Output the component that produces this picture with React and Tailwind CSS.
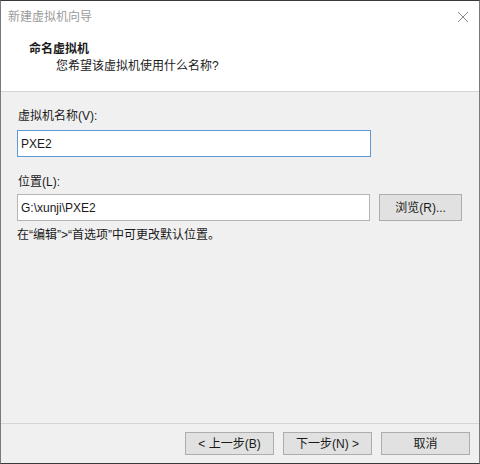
import React from "react";

const Btn = ({ children, className = "" }) => (
  <button
    className={
      "h-[23px] border border-[#adadad] bg-[#e1e1e1] text-[12px] text-[#1a1a1a] leading-none " +
      className
    }
  >
    {children}
  </button>
);

const App = () => {
  return (
    <div
      className="w-[480px] h-[464px] flex flex-col border-t border-t-[#3a3a3a] border-x border-x-[#7a7a7a] border-b border-b-[#3a3a3a] bg-[#f0f0f0] text-[12px] text-[#1a1a1a]"
      style={{ fontFamily: '"Liberation Sans", "Noto Sans CJK SC", sans-serif' }}
    >
      {/* Header */}
      <div className="h-[91px] bg-white flex flex-col border-b border-b-[#d5d5d5]">
        <div className="h-[31px] flex items-center justify-between pl-[7px] pr-[10px]">
          <span className="text-[12px] text-[#9b9b9b]">新建虚拟机向导</span>
          <svg width="12" height="12" viewBox="0 0 12 12" className="text-[#8a8a8a]">
            <path d="M1 1 L11 11 M11 1 L1 11" stroke="currentColor" strokeWidth="1" />
          </svg>
        </div>
        <div className="pl-[28px] mt-[9px] font-bold leading-[16px]">命名虚拟机</div>
        <div className="pl-[55px] mt-[1px] leading-[16px]">您希望该虚拟机使用什么名称?</div>
      </div>

      {/* Body */}
      <div className="flex-1 pl-[16px] pr-[17px] pt-[16px] border-b border-b-[#d5d5d5]">
        <div className="pl-[1px] leading-[16px]">虚拟机名称(V):</div>
        <div className="mt-[6px] w-[354px] h-[27px] border border-[#5a9ad8] bg-white flex items-center px-[3px]">
          PXE2
        </div>
        <div className="mt-[17px] pl-[1px] leading-[16px]">位置(L):</div>
        <div className="mt-[4px] flex items-center gap-[9px]">
          <div className="w-[354px] h-[27px] border border-[#b4b4b4] bg-white flex items-center px-[3px]">
            G:\xunji\PXE2
          </div>
          <Btn className="w-[83px] h-[27px]">浏览(R)...</Btn>
        </div>
        <div className="mt-[6px] leading-[16px]">在“编辑”&gt;“首选项”中可更改默认位置。</div>
      </div>

      {/* Footer */}
      <div className="h-[39px] flex items-start justify-end pt-[8px] pr-[9px] gap-[9px]">
        <Btn className="w-[89px]">&lt; 上一步(B)</Btn>
        <Btn className="w-[89px]">下一步(N) &gt;</Btn>
        <Btn className="w-[89px]">取消</Btn>
      </div>
    </div>
  );
};

export default App;
